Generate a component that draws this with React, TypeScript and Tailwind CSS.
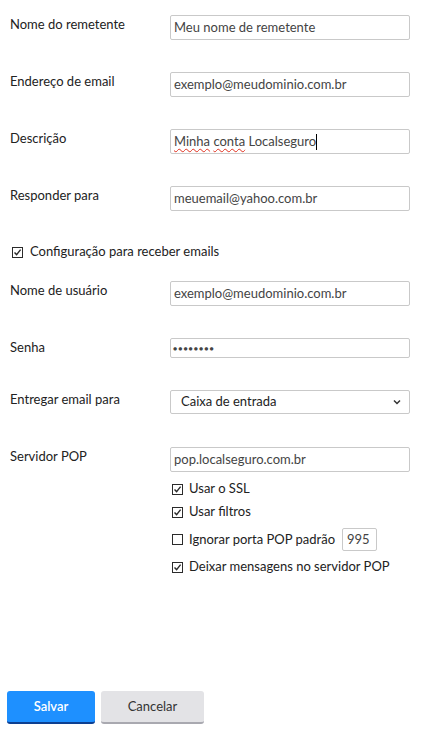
import React from "react";

function CheckIcon({ checked }: { checked: boolean }) {
  return (
    <svg width="11" height="11" viewBox="0 0 11 11" className="shrink-0">
      <rect x="0.5" y="0.5" width="10" height="10" fill="white" stroke="#2b2b2b" strokeWidth="1" />
      {checked && <path d="M2.5 5.5 L4.6 7.6 L8.6 2.6" fill="none" stroke="#2b2b2b" strokeWidth="1.4" />}
    </svg>
  );
}

function Field({ label, children }: { label: string; children: React.ReactNode }) {
  return (
    <div className="flex items-start">
      <div className="w-[160px] leading-[18px] text-[#222]">{label}</div>
      <div className="w-[240px]">{children}</div>
    </div>
  );
}

const inputCls =
  "w-full h-[25px] border border-[#c9c9c9] rounded-[2px] px-[3px] flex items-center text-[#444] bg-white";

function Check({ checked, children }: { checked: boolean; children: React.ReactNode }) {
  return (
    <div className="flex items-center gap-[6px] h-[18px] text-[#222]">
      <CheckIcon checked={checked} />
      {children}
    </div>
  );
}

export default function App() {
  return (
    <div
      className="w-[421px] h-[730px] bg-white text-[13px] px-[10px] pt-[15px]"
      style={{ fontFamily: 'Lato, "Open Sans", sans-serif' }}
    >
      <Field label="Nome do remetente">
        <div className={inputCls}>Meu nome de remetente</div>
      </Field>
      <div className="h-[32px]" />
      <Field label="Endereço de email">
        <div className={inputCls}>exemplo@meudominio.com.br</div>
      </Field>
      <div className="h-[32px]" />
      <Field label="Descrição">
        <div className={inputCls}>
          <span className="underline decoration-wavy decoration-[#e0301e] decoration-1 underline-offset-2">Minha</span>
          <span>&nbsp;</span>
          <span className="underline decoration-wavy decoration-[#e0301e] decoration-1 underline-offset-2">conta</span>
          <span>&nbsp;Localseguro</span>
          <span className="w-px h-[16px] bg-black" />
        </div>
      </Field>
      <div className="h-[32px]" />
      <Field label="Responder para">
        <div className={inputCls}>meuemail@yahoo.com.br</div>
      </Field>

      <div className="mt-[32px] flex items-center gap-[7px] h-[18px] text-[#222] pl-[2px]">
        <CheckIcon checked />
        Configuração para receber emails
      </div>

      <div className="h-[20px]" />
      <Field label="Nome de usuário">
        <div className={inputCls}>exemplo@meudominio.com.br</div>
      </Field>
      <div className="h-[32px]" />
      <Field label="Senha">
        <div className="w-full h-[20px] border border-[#c9c9c9] rounded-[2px] px-[2px] flex items-center text-[#444] bg-white">
          <span className="text-[7px] tracking-[1px] leading-none">●●●●●●●●</span>
        </div>
      </Field>
      <div className="h-[32px]" />
      <Field label="Entregar email para">
        <div className="w-full h-[24px] border border-[#c9c9c9] rounded-[2px] pl-[10px] pr-[8px] flex items-center justify-between text-[#222] bg-white">
          <span>Caixa de entrada</span>
          <svg width="8" height="6" viewBox="0 0 8 6">
            <path d="M1 1.5 L4 4.5 L7 1.5" fill="none" stroke="#333" strokeWidth="1.5" />
          </svg>
        </div>
      </Field>
      <div className="h-[33px]" />
      <Field label="Servidor POP">
        <div>
          <div className={inputCls}>pop.localseguro.com.br</div>
          <div className="pl-[2px] mt-[8px] flex flex-col">
            <Check checked>Usar o SSL</Check>
            <div className="mt-[5px]">
              <Check checked>Usar filtros</Check>
            </div>
            <div className="mt-[7px] flex items-center gap-[6px] h-[23px] text-[#222]">
              <CheckIcon checked={false} />
              <span>Ignorar porta POP padrão</span>
              <div className="ml-[1px] w-[35px] h-[23px] border border-[#c9c9c9] rounded-[2px] px-[4px] flex items-center text-[#444]">
                995
              </div>
            </div>
            <div className="mt-[7px]">
              <Check checked>Deixar mensagens no servidor POP</Check>
            </div>
          </div>
        </div>
      </Field>

      <div className="mt-[115px] flex gap-[6px] -ml-[3px]">
        <button className="w-[88px] h-[33px] bg-[#1e90ff] border-b-2 border-[#0d3f91] rounded-[3px] text-white font-semibold">
          Salvar
        </button>
        <button className="w-[103px] h-[33px] bg-[#e3e3e6] border-b-2 border-[#a9a9b0] rounded-[3px] text-[#333]">
          Cancelar
        </button>
      </div>
    </div>
  );
}
